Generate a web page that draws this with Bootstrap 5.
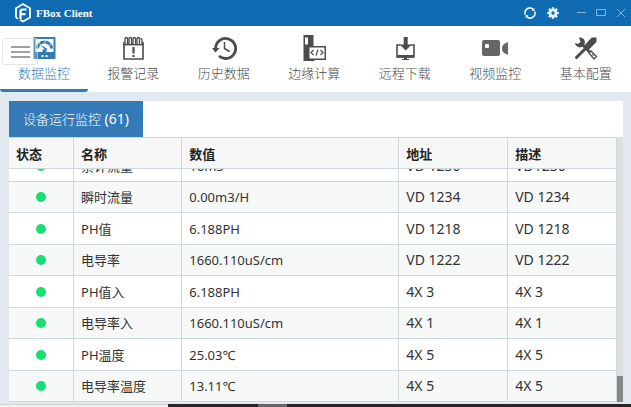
<!DOCTYPE html>
<html lang="zh-CN">
<head>
<meta charset="utf-8">
<meta name="viewport" content="width=device-width, initial-scale=1">
<title>FBox Client</title>
<link href="https://cdn.jsdelivr.net/npm/bootstrap@5.3.0/dist/css/bootstrap.min.css" rel="stylesheet">
<style>
  body { font-family: "Noto Sans", "Noto Sans CJK SC", sans-serif; font-size: 13px; color: #333; background: #e2e9f0; }
  svg { display: block; }
  .titlebar { height: 26px; background: #0e6bb1; color: #fff; padding-left: 13px; padding-right: 4px; }
  .brand { font-family: "Liberation Serif", serif; font-size: 11px; font-weight: 700; line-height: 26px; margin-left: 3px; }
  .tool { border: 0; background: none; padding: 0; color: #e3f6ff; }
  .tool.dim { color: #7fb9e6; }
  .refresh { margin-right: 9px; }
  .split { width: 1px; height: 26px; background: #1b62a0; margin: 0 6px 0 8px; }
  .mainnav { background: #fff; height: 66px; }
  .mainnav a { flex: 1 1 0; color: #4c4c4c; font-weight: 300; line-height: 24px; padding-top: 9px; text-decoration: none; border-bottom: 3px solid transparent; }
  .mainnav a.active { flex: 0 0 88px; color: #337ab7; border-bottom-color: #337ab7; border-radius: 0 0 3px 3px; }
  .menu-toggle { left: 2px; top: 38px; width: 36px; height: 27px; border: 1px solid rgba(215,215,215,.6); border-radius: 3px; background: rgba(255,255,255,.2); padding: 0 0 0 8px; }
  .panel { margin: 9px 8px 0 9px; background: #fff; }
  .tab-btn { height: 36px; width: 134px; border: 0; background: #337ab7; color: #fff; font-weight: 300; padding: 0 0 1px; }
  .tab-count { font-size: 14px; font-weight: 400; }
  .scroll-area { border-top: 1px solid #ccd5da; }
  .grid { border-collapse: separate; border-spacing: 0; table-layout: fixed; }
  .grid th, .grid td { padding: 0 7px; border-right: 1px solid #cdd9df; border-bottom: 1px solid #cdd9df; line-height: 22px; white-space: nowrap; vertical-align: middle; }
  .grid th { position: sticky; top: 0; height: 31px; background: #f7f7f7; font-weight: 700; color: #222; padding-top: 2px; }
  .grid td { font-weight: 400; height: 31px; background: #fff; }
  .grid tbody tr:nth-child(odd) td { height: 32px; }
  .grid tbody tr:nth-child(even) td { background: #f7f8f8; }
  .grid .code { font-size: 14px; }
  .dot { width: 10px; height: 10px; background: #19de71; border-radius: 50%; display: block; margin: 0 auto; }
  .rail { width: 6px; background: #dcdee0; }
  .thumb { height: 26px; background: #848587; }
  .bottom { height: 5px; padding-top: 2px; }
  .bottom-light { width: 168px; background: #f1f1f1; border-top: 1px solid #cfd6da; }
  .bottom-dark { background: #29262a; }
  .bottom-mid { width: 29px; margin-left: 90px; background: #66656a; }
</style>
<script src="https://cdn.jsdelivr.net/npm/bootstrap@5.3.0/dist/js/bootstrap.bundle.min.js"></script>
</head>
<body class="vh-100 d-flex flex-column overflow-hidden position-relative">

<header class="titlebar d-flex align-items-center flex-shrink-0">
  <svg width="20" height="22" viewBox="0 0 20 22" fill="none" stroke="#fff" aria-hidden="true">
    <path d="M3 15.500V6.200L10 2l7 4.200v9.300L10 19.500l-3-1.700" stroke-width="1.800"/>
    <path d="M3 15.500l2 1.200" stroke-width="1.800"/>
    <path d="M7.500 17V9.500Q7.500 7.500 9.500 7.500H13.500M8 12.200h4.500" stroke-width="2.200"/>
  </svg>
  <span class="brand me-auto">FBox Client</span>
  <button class="tool refresh" aria-label="刷新">
    <svg width="14" height="14" viewBox="0 0 14 14" fill="none" stroke="currentColor" stroke-width="1.600"><path d="M2.300 8.500A4.800 4.800 0 0 1 10.200 3.400M11.700 5.500A4.800 4.800 0 0 1 3.800 10.600"/><path d="M11.500 2v3H8.500zM2.500 12V9h3z" fill="currentColor" stroke="none"/></svg>
  </button>
  <button class="tool" aria-label="设置">
    <svg width="14" height="14" viewBox="0 0 14 14" fill="none" stroke="currentColor"><circle cx="7" cy="7" r="3.100" stroke-width="2.800"/><path d="M7 1.200v2M7 10.800v2M1.200 7h2M10.800 7h2M2.900 2.900l1.400 1.400M9.700 9.700l1.400 1.400M2.900 11.100l1.400-1.400M9.700 4.300l1.400-1.400" stroke-width="2.200"/></svg>
  </button>
  <span class="split"></span>
  <button class="tool dim me-2" aria-label="最小化"><svg width="12" height="12" viewBox="0 0 12 12" stroke="currentColor"><path d="M2 5.500h9"/></svg></button>
  <button class="tool dim me-2" aria-label="最大化"><svg width="12" height="12" viewBox="0 0 12 12" fill="none" stroke="currentColor"><path d="M1.500 2.500h9v6h-9z"/></svg></button>
  <button class="tool dim" aria-label="关闭"><svg width="12" height="12" viewBox="0 0 12 12" stroke="currentColor"><path d="M2 2l8 8M10 2l-8 8"/></svg></button>
</header>

<nav class="mainnav d-flex flex-shrink-0 text-center" aria-label="主导航">
  <a href="#" class="active" aria-current="page">
    <svg class="mx-auto" width="26" height="26" viewBox="0 0 26 26"><rect x="2.500" y="2" width="22" height="22" rx="1" fill="#337ab7"/><path d="M4.500 4h18v13H4.500z" fill="#fff"/><path d="M6.500 13.500a7 6.500 0 0 1 14 0" fill="none" stroke="#337ab7" stroke-width="3" stroke-dasharray="5 .7"/><path d="M14.500 15.500L9.500 9.500l7 4.500z" fill="#337ab7"/><path d="M11.500 14.500h4V17h-4z" fill="#337ab7"/><path d="M10.500 20h2v2h-2zM14.500 20h2v2h-2z" fill="#fff"/></svg>
    数据监控</a>
  <a href="#">
    <svg class="mx-auto" width="26" height="26" viewBox="0 0 26 26" fill="none" stroke="currentColor"><path d="M4 7v17h19V7" stroke-width="1.600"/><path d="M3.300 9.700h20.400" stroke-width="1.400"/><path d="M5 9V3.500q1.500-2 2.500 0V9M9 9V3.500q1.500-2 2.500 0V9M13 9V3.500q1.500-2 2.500 0V9M17 9V3.500q1.500-2 2.500 0V9M20.500 4q1.500-1 1.500 1v4" stroke-width="1.300"/><path d="M13.500 12v6.500M13.500 20v2" stroke-width="2.200"/></svg>
    报警记录</a>
  <a href="#">
    <svg class="mx-auto" width="26" height="26" viewBox="0 0 26 26" fill="none" stroke="currentColor"><path d="M4.600 13.500A10 10 0 1 1 8 21" stroke-width="2.800"/><path d="M1 13h7.500l-4 4.500z" fill="currentColor" stroke="none"/><path d="M13.500 7v6.500l5 3" stroke-width="1.500"/></svg>
    历史数据</a>
  <a href="#">
    <svg class="mx-auto" width="26" height="26" viewBox="0 0 26 26" fill="none" stroke="currentColor"><path d="M2.500 0h10v11H25v14H13.500v1h-11z" fill="currentColor" stroke="none"/><path d="M4 2.500h3v7H4z" fill="#fff" stroke="none"/><path d="M8.500 12.500h15v11h-15z" fill="#fff" stroke="none"/><path d="M12.500 15L10 17.500l2.500 2.500M19.500 15l2.500 2.500-2.500 2.500M17 14.500l-2 6" stroke-width="1.200"/></svg>
    边缘计算</a>
  <a href="#">
    <svg class="mx-auto" width="26" height="26" viewBox="0 0 26 26" fill="none" stroke="currentColor"><path d="M8.500 10H5v12h17V10h-3.500" stroke-width="1.600"/><path d="M5 20h17v2.500H5zM12 22h3v2h2v1h-7v-1h2zM11.700 2h4v7.500h4l-6 6-6-6h4z" fill="currentColor" stroke="none"/></svg>
    远程下载</a>
  <a href="#">
    <svg class="mx-auto" width="28" height="26" viewBox="0 0 28 26"><rect x="1" y="5" width="18" height="16" rx="2" fill="#666"/><rect x="4" y="9" width="4" height="4" rx="1" fill="#fff"/><path d="M27 7v13l-4-2q-2-1-2-4.500T23 9z" fill="#666"/></svg>
    视频监控</a>
  <a href="#">
    <svg class="mx-auto" width="26" height="26" viewBox="0 0 26 26" fill="none" stroke="currentColor"><path d="M3.500 22.500l8-8" stroke-width="3" stroke-linecap="round"/><path d="M13 12.500l7.500-8" stroke-width="5"/><path d="M19 2.500h4.500V7L15 15.500l-4-4z" fill="currentColor" stroke="none"/><path d="M6 2.500a5 5 0 1 1-4 5.500l3 1 2.500-2z" fill="currentColor" stroke="none"/><path d="M9 9.500l8 8" stroke-width="2.500"/><path d="M16 18l2-2 5.500 5.500-2.500 2.500z" stroke-width="1.300"/><path d="M19 19l2 2" stroke-width="1"/></svg>
    基本配置</a>
</nav>

<button class="menu-toggle position-absolute" aria-label="菜单">
  <svg width="20" height="14" viewBox="0 0 20 14" stroke="#818181" stroke-width="1.500"><path d="M0 2h19M0 7h19M0 12h19"/></svg>
</button>

<main class="panel d-flex flex-column flex-grow-1 overflow-hidden">
  <div class="d-flex"><button class="tab-btn">设备运行监控<span class="tab-count"> (61)</span></button></div>
  <div class="d-flex flex-grow-1 overflow-hidden">
    <div class="scroll-area flex-grow-1 overflow-hidden" id="records">
      <table class="grid w-100">
        <colgroup><col style="width:10.700%"><col style="width:17.800%"><col style="width:35.700%"><col style="width:17.900%"><col style="width:17.900%"></colgroup>
        <thead><tr><th>状态</th><th>名称</th><th>数值</th><th>地址</th><th>描述</th></tr></thead>
        <tbody>
          <tr><td><span class="dot"></span></td><td>累计流量</td><td>16m3</td><td class="code">VD 1230</td><td class="code">VD1230</td></tr>
          <tr><td><span class="dot"></span></td><td>瞬时流量</td><td>0.00m3/H</td><td class="code">VD 1234</td><td class="code">VD 1234</td></tr>
          <tr><td><span class="dot"></span></td><td>PH值</td><td>6.188PH</td><td class="code">VD 1218</td><td class="code">VD 1218</td></tr>
          <tr><td><span class="dot"></span></td><td>电导率</td><td>1660.110uS/cm</td><td class="code">VD 1222</td><td class="code">VD 1222</td></tr>
          <tr><td><span class="dot"></span></td><td>PH值入</td><td>6.188PH</td><td class="code">4X 3</td><td class="code">4X 3</td></tr>
          <tr><td><span class="dot"></span></td><td>电导率入</td><td>1660.110uS/cm</td><td class="code">4X 1</td><td class="code">4X 1</td></tr>
          <tr><td><span class="dot"></span></td><td>PH温度</td><td>25.03℃</td><td class="code">4X 5</td><td class="code">4X 5</td></tr>
          <tr><td><span class="dot"></span></td><td>电导率温度</td><td>13.11℃</td><td class="code">4X 5</td><td class="code">4X 5</td></tr>
        </tbody>
      </table>
    </div>
    <div class="rail d-flex flex-column justify-content-end flex-shrink-0"><div class="thumb"></div></div>
  </div>
</main>

<footer class="bottom d-flex flex-shrink-0">
  <div class="bottom-light"></div>
  <div class="bottom-dark d-flex flex-grow-1"><div class="bottom-mid"></div></div>
</footer>

<script>
  const records = document.getElementById('records');
  records.scrollTop = records.scrollHeight;
</script>
</body>
</html>
